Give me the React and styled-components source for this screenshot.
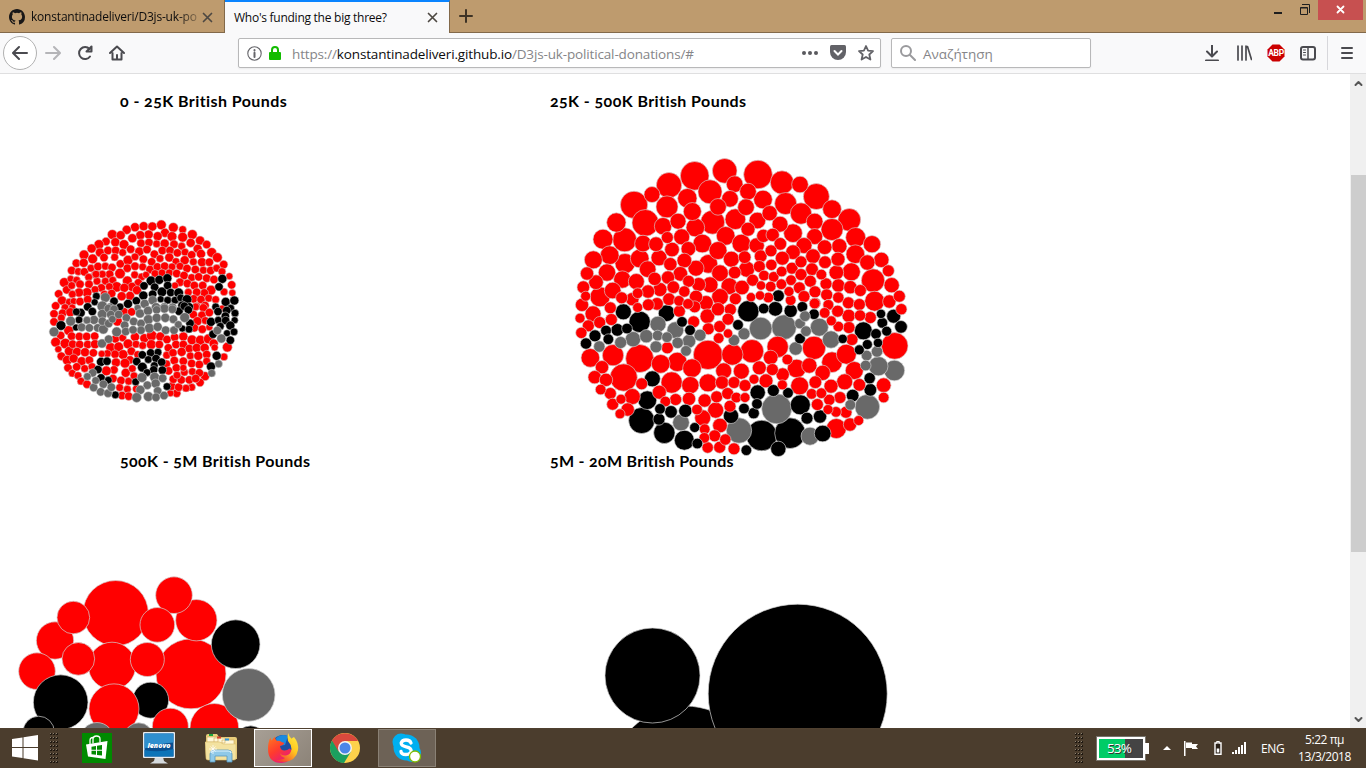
import React from "react";
import styled, { createGlobalStyle, css } from "styled-components";

const GlobalStyle = createGlobalStyle`
  * { box-sizing: border-box; }
  body { margin: 0; background: #fff; overflow: hidden; }
  svg { display: block; flex: none; }
`;

const Desktop = styled.div`
  display: flex;
  flex-direction: column;
  width: 1366px;
  height: 768px;
  overflow: hidden;
  font-family: "Open Sans", "Noto Sans", sans-serif;
`;

/* ---------- title bar ---------- */

const TitleBar = styled.header`
  display: flex;
  height: 33px;
  background: #be9b6e;
  box-shadow: inset 0 -1px #82694a;
`;

const Tab = styled.div`
  display: flex;
  align-items: center;
  width: 225px;
  height: 33px;
  padding: 1px 11px 0 9px;
  border-right: 1px solid #82694a;
  ${(p) =>
    p.$active &&
    css`
      padding-top: 0;
      background: #f9f9fa;
      border-top: 2px solid #0a84ff;
    `}
`;

const TabLabel = styled.span`
  flex: 1;
  margin-left: ${(p) => (p.$icon ? 6 : 0)}px;
  padding-bottom: 1px;
  white-space: nowrap;
  font-size: 12px;
  letter-spacing: ${(p) => p.$track}px;
  color: #0c0c0d;
  ${(p) =>
    p.$icon &&
    css`
      mask-image: linear-gradient(to right, #000 86%, transparent 102%);
    `}
`;

const NewTab = styled.div`
  display: flex;
  padding: 9px 0 0 9px;
`;

const WindowControls = styled.div`
  display: flex;
  margin-left: auto;
  margin-right: 3px;
`;

const ControlButton = styled.div`
  display: flex;
  justify-content: center;
  align-items: center;
  width: ${(p) => p.$w}px;
  height: ${(p) => (p.$close ? 20 : 19)}px;
  padding-bottom: ${(p) => (p.$close ? 1 : 0)}px;
  background: ${(p) => (p.$close ? "#c75050" : "transparent")};
`;

/* ---------- navigation bar ---------- */

const NavBar = styled.nav`
  display: flex;
  align-items: center;
  height: 41px;
  background: #f9f9fa;
  border-bottom: 1px solid #dfdfe0;
`;

const BackButton = styled.div`
  display: grid;
  place-items: center;
  width: 34px;
  height: 34px;
  margin-left: 3px;
  border: 1px solid #b1b1b1;
  border-radius: 50%;
  background: #fff;
`;

const NavButton = styled.div`
  display: grid;
  place-items: center;
  width: 32px;
  height: 32px;
`;

const Field = styled.div`
  display: flex;
  align-items: center;
  width: ${(p) => p.$w}px;
  height: 30px;
  margin-left: ${(p) => p.$gap}px;
  padding: 0 6px 0 8px;
  border: 1px solid #b8b8b9;
  border-radius: 2px;
  background: #fff;
  box-shadow: 0 1px 2px rgba(0, 0, 0, 0.06);
`;

const FieldText = styled.span`
  flex: 1;
  margin-left: ${(p) => p.$gap}px;
  padding-top: 2px;
  white-space: nowrap;
  font-size: 13.5px;
  letter-spacing: ${(p) => p.$track}px;
  color: #858588;
  b { font-weight: 400; color: #0c0c0d; }
`;

const FieldIcons = styled.div`
  display: flex;
  align-items: center;
  gap: ${(p) => p.$gap}px;
`;

const Tools = styled.div`
  display: flex;
  align-items: center;
  margin-left: auto;
  padding-right: 3px;
`;

const Divider = styled.div`
  width: 1px;
  height: 34px;
  margin: 0 3px;
  background: #d7d7db;
`;

/* ---------- page ---------- */

const Viewport = styled.main`
  display: flex;
  height: 654px;
  background: #fff;
`;

const ChartGrid = styled.section`
  display: grid;
  flex: 1;
  grid-template-columns: 430px 500px;
  grid-auto-rows: 360px;
  padding-top: 9px;
  height: 654px;
  overflow: hidden;
`;

const ChartTitle = styled.h3`
  height: 36px;
  margin: 0;
  padding-left: 120px;
  line-height: 36px;
  white-space: nowrap;
  font-family: Lato, sans-serif;
  font-size: 16px;
  font-weight: 700;
  font-variant-numeric: oldstyle-nums;
  letter-spacing: ${(p) => p.$track}px;
  color: #000;
`;

const Canvas = styled.svg`
  overflow: visible;
`;

const ScrollBar = styled.div`
  display: flex;
  flex-direction: column;
  align-items: center;
  width: 16px;
  padding: 6px 0 5px;
  background: #f0f0f0;
`;

const Thumb = styled.div`
  width: 15px;
  height: 377px;
  margin: 88px 0 auto;
  align-self: flex-end;
  background: #cdcdcd;
`;

/* ---------- task bar ---------- */

const TaskBar = styled.footer`
  display: flex;
  align-items: center;
  height: 40px;
  background: linear-gradient(#514231 0, #4b3d2d 2px, #4b3d2d 100%);
`;

const StartButton = styled.div`
  display: flex;
  width: 49px;
  padding-left: 11px;
`;

const AppButton = styled.div`
  display: grid;
  place-items: center;
  width: 58px;
  height: 38px;
  margin: 0 2px;
  border: 1px solid transparent;
  ${(p) =>
    p.$state === "active" &&
    css`
      border-color: #fff;
      background: linear-gradient(135deg, #a79f95, #8c8378);
    `}
  ${(p) =>
    p.$state === "open" &&
    css`
      border-color: #8a8175;
      background: #6d6256;
    `}
`;

const Apps = styled.div`
  display: flex;
  margin-left: 7px;
`;

const Tray = styled.div`
  display: flex;
  align-items: center;
  margin-left: auto;
  color: #fff;
  font-size: 12px;
`;

const Battery = styled.div`
  position: relative;
  width: 48px;
  height: 23px;
  margin: 0 18px 0 13px;
  border: 2px solid #fff;
  outline: 1px solid #77736b;
  background: linear-gradient(to right, #00cc66 60%, #444 60%);
  line-height: 18px;
  padding-right: 4px;
  text-align: center;
  font-size: 13.5px;
  letter-spacing: -0.8px;
  text-shadow: 1px 1px #333;
  &::after {
    content: "";
    position: absolute;
    right: -6px;
    top: 4px;
    width: 4px;
    height: 11px;
    background: #fff;
  }
`;

const TrayIcon = styled.div`
  margin-right: ${(p) => p.$gap}px;
`;

const Language = styled.span`
  width: 24px;
  letter-spacing: -0.4px;
  white-space: nowrap;
`;

const Clock = styled.div`
  width: 81px;
  padding-right: 2px;
  text-align: center;
  line-height: 17px;
  letter-spacing: -0.45px;
  white-space: nowrap;
`;

/* ---------- chart data: x y r, in thirds of a pixel ---------- */

const RED = "#ff0000";
const BLACK = "#000000";
const GREY = "#696969";

const parse = (fill, dx, dy, text) =>
  text
    .split(";")
    .map((t) => t.trim())
    .filter(Boolean)
    .map((t) => {
      const [x, y, r] = t.split(",").map(Number);
      return { x: dx + x / 3, y: dy + y / 3 + 0.2, r: r / 3, fill };
    });

const bySize = (list) => [...list].sort((a, b) => b.r - a.r);

const smallDonations = [
  ...parse(RED, 40, 210, `364,44,14;400,52,14;428,58,11;457,73,14;285,51,13;311,48,13;337,49,13;260,59,13;217,73,14;242,75,13;480,91,13;500,103,12;375,68,13;353,78,13;326,73,13;301,75,13;277,84,13;396,79,14;428,81,14;452,98,13;198,94,12;177,103,14;155,115,13;132,134,14;109,159,12;226,96,13;252,103,14;303,99,12;327,97,12;350,101,11;374,100,13;402,102,12;425,108,11;473,116,13;515,127,14;532,142,14;551,163,12;180,127,13;204,121,12;227,121,12;248,127,11;272,117,12;298,124,13;321,118,12;343,132,12;367,121,12;390,121,12;412,128,12;435,126,11;455,134,12;483,131,13;158,146,14;192,142,12;224,141,11;241,161,12;264,150,14;285,140,11;310,147,12;335,155,12;360,145,11;388,142,13;408,154,11;434,150,13;460,155,11;486,156,13;508,156,12;131,158,13;95,181,12;115,184,11;133,185,12;153,174,11;174,169,12;196,168,11;216,172,12;209,192,12;187,192,11;165,193,11;240,190,15;262,174,12;285,168,12;308,170,11;330,178,12;352,170,12;374,168,12;396,170,11;420,168,11;441,175,12;466,178,12;490,180,11;512,181,12;530,174,11;546,184,11;568,198,10;575,224,12;577,248,10;73,217,14;92,206,10;110,210,11;146,201,11;56,251,12;80,239,12;95,226,11;120,222,12;147,222,12;171,213,11;196,213,11;218,210,11;230,230,15;208,229,11;184,233,12;165,238,11;141,247,14;117,247,13;97,252,11;66,271,13;47,287,12;262,212,14;284,194,11;305,200,11;295,218,12;276,230,13;253,233,13;291,240,13;270,257,13;245,258,13;318,194,10;345,190,11;366,188,11;388,188,11;410,190,12;432,196,12;455,202,11;476,200,12;500,204,12;522,208,12;420,216,12;405,226,10;442,220,12;463,226,12;488,226,12;513,240,14;493,248,12;470,246,12;445,246,11;461,266,12;483,268,12;506,264,11;527,268,11;552,245,11;470,288,11;495,286,12;88,276,11;101,273,10;120,274,12;143,268,12;75,292,11;97,292,10;193,252,11;215,250,12;168,192,11`),
  ...parse(RED, 40, 305, `42,26,12;42,50,12;68,24,12;91,21,13;64,38,11;86,76,14;62,91,12;47,111,14;76,115,15;88,138,14;55,132,10;64,153,12;82,165,14;84,188,12;97,204,11;114,211,11;123,228,11;141,237,12;95,93,12;118,94,12;140,94,12;164,93,12;98,117,12;119,118,12;143,118,12;165,117,13;111,140,13;135,141,13;160,143,12;101,160,13;125,168,13;148,165,12;110,185,12;134,190,11;156,184,11;232,48,14;253,20,12;275,20,12;226,101,12;248,98,11;212,127,14;236,125,14;264,116,14;285,95,13;313,99,13;335,91,15;361,94,13;381,103,12;404,96,12;430,94,13;456,104,14;481,105,14;505,101,14;288,117,11;308,121,11;334,118,14;358,118,12;385,128,12;408,118,12;430,118,12;249,148,14;225,147,12;202,145,11;185,146,10;274,138,12;270,164,12;293,148,11;228,172,13;255,174,14;222,194,12;199,197,14;257,203,13;277,190,11;219,220,12;243,226,12;266,228,11;239,247,11;262,252,11;246,271,12;266,273,12;290,251,12;282,212,11;380,150,11;399,143,12;425,140,13;448,130,12;470,128,13;494,128,13;521,115,13;562,126,14;552,155,11;380,176,11;403,166,12;386,197,12;409,188,12;430,168,12;451,152,11;475,152,13;500,148,12;524,127,10;455,175,12;478,178,12;500,168,11;495,213,13;480,232,12;455,246,11;438,249,11;410,264,12;391,264,10;395,243,12;416,246,12;400,222,12;424,224,12;411,210,11;433,201,11;457,199,11;478,203,12;448,224,12;467,220,12;467,5,11;490,8,12;547,10,10;460,28,12;486,30,12;508,22,12;472,48,13;496,46,11;463,68,12;487,72,12;508,66,10;430,188,10`),
  ...parse(BLACK, 40, 210, `547,206,13;537,230,12;333,212,14;358,209,13;382,204,13;312,227,12;344,231,12;366,245,14;383,226,12;392,247,12;416,248,14;338,252,12;310,256,13;289,272,12;264,281,13;222,273,12;240,290,11;169,258,11;164,276,10;143,290,11;362,267,10;383,270,11;405,270,11;422,263,11;441,268,14;427,286,13;448,290,12;527,290,11;557,275,13;583,271,13;572,294,11`),
  ...parse(BLACK, 40, 305, `122,23,13;109,20,11;143,5,12;157,19,12;117,44,11;63,61,14;108,67,10;417,18,12;433,3,12;445,14,12;450,54,12;427,70,10;447,72,11;534,19,12;560,16,12;585,24,11;513,50,13;535,45,11;556,33,12;557,46,12;584,45,10;541,63,11;571,61,13;582,80,11;561,84,10;571,105,12;519,87,12;530,152,13;513,184,13;183,170,13;201,168,12;174,193,12;183,218,12;205,225,11;226,269,11;287,230,11;381,244,11;307,149,12;332,143,12;354,141,11;290,169,12;307,186,14;325,163,11;348,160,12;365,171,12;343,181,11;341,194,12;367,195,12;321,202,11`),
  ...parse(GREY, 40, 210, `196,262,14;187,288,15;210,291,12;314,281,13;338,270,13;293,293,10;348,291,13;373,290,12;398,290,11;325,300,11`),
  ...parse(GREY, 40, 305, `92,48,14;42,80,14;187,27,14;205,10,12;222,12,12;212,28,12;162,44,13;141,45,11;125,66,12;148,68,12;173,68,12;190,72,14;187,48,12;206,55,12;217,42,11;230,80,14;236,28,12;259,38,12;254,60,12;257,79,12;281,49,12;300,25,13;324,17,13;373,10,13;350,14,12;397,12,12;325,43,14;350,38,13;376,38,13;400,42,12;434,37,14;303,55,12;328,69,14;303,75,12;279,74,12;353,65,13;377,75,12;402,75,12;415,58,11;186,115,13;206,102,12;544,100,13;532,76,12;536,176,11;515,204,11;158,203,12;142,214,11;161,247,12;167,226,11;190,237,12;182,260,12;204,264,12;214,246,12;306,217,14;344,216,14;368,219,12;322,240,12;347,235,13;301,254,13;290,277,14;325,274,14;353,257,12;348,276,12;372,271,12`),
].map((d) => ({ ...d, r: d.r + 0.2 }));

const mediumDonations = bySize([
  ...parse(RED, 570, 150, `374,77,43;464,62,37;297,105,38;246,133,24;192,164,41;420,125,36;352,144,29;291,170,33;494,102,25;480,146,25;367,184,27;444,170,25;226,218,40;139,217,29;99,267,30;164,269,36;279,228,26;324,213,24;376,232,28;428,216,36;496,207,31;467,257,28;335,260,24;292,262,18;219,280,25;258,282,22;306,298,22;355,296,22;397,280,28;444,301,27;484,327,24;514,280,28;119,315,28;70,329,27;165,340,30;209,325,28;267,323,24;343,331,22;301,342,20;415,341,28;378,354,24;111,367,26;51,370,20;78,396,22;40,411,19;157,388,26;233,357,25;199,394,24;254,386,20;294,382,20;331,371,22;356,393,18;386,403,21;420,404,24;450,369,25;494,367,19;478,408,25;516,412,22;128,421,25;47,438,15;36,464,20;90,440,30;155,443,18;187,447,20;203,429,16;234,424,20;270,418,21;310,411,19;343,424,17;378,440,20;297,447,19;327,452,16;354,461,16;450,440,25;408,458,22;496,446,18;261,461,19;203,472,15;235,464,18;121,473,18`),
  ...parse(RED, 740, 150, `54,73,43;126,97,35;180,103,25;229,139,39;24,124,25;69,148,28;137,160,33;183,190,32;18,171,25;276,177,28;328,209,34;89,189,23;52,211,25;120,222,24;224,214,25;276,238,33;159,249,28;24,237,21;70,257,20;98,254,20;224,259,24;347,262,30;396,282,26;424,329,23;445,362,18;455,405,23;478,438,18;399,391,35;346,312,28;382,337,23;298,288,23;254,291,22;192,286,24;121,281,19;159,306,22;127,324,21;93,302,18;50,286,23;14,321,19;62,318,19;94,344,17;58,349,18;20,357,24;38,390,18;72,376,16;101,380,16;125,364,16;156,354,18;183,335,18;219,318,22;255,336,19;294,327,21;216,357,19;289,367,22;334,365,27;183,373,18;153,390,16;124,402,16;92,409,16;63,406,14;211,393,18;244,373,16;258,401,18;295,406,20;331,411,20;361,421,18;404,453,30;178,413,18;147,424,15;33,441,14;60,436,14;85,442,16;192,439,18;225,425,18;260,434,18;295,442,17;152,450,16;225,459,17;265,464,16;325,458,18;358,463,18;448,454,20`),
  ...parse(RED, 570, 300, `328,33,18;374,20,18;412,48,22;444,27,20;481,28,18;69,41,24;30,54,15;55,77,18;89,67,18;124,58,18;34,98,17;371,65,18;415,86,18;449,79,18;474,57,18;446,114,16;474,100,14;292,143,18;61,173,28;129,165,32;209,175,42;161,232,41;96,201,20;74,231,20;108,239,20;92,268,16;121,280,18;215,251,18;272,191,28;322,185,29;366,204,28;414,164,44;487,163,32;461,212,24;514,213,24;305,247,32;361,255,26;414,248,27;456,247,20;492,247,18;268,276,21;187,289,24;153,297,15;128,312,18;173,328,20;150,341,15;286,304,16;317,298,18;357,296,20;404,301,20;440,290,18;473,280,18;499,292,16;381,328,16;437,330,24;480,318,18;398,353,24;450,376,22;404,387,16;403,413,16;434,407,18;466,418,17;413,442,17;449,441,18;492,446,18`),
  ...parse(BLACK, 570, 300, `160,35,24;209,65,32;290,39,25;336,65,16;360,90,16;504,74,16;108,91,16;142,89,19;171,85,16;75,107,18;48,130,17;115,117,16;247,236,24;232,300,28;215,361,39;270,326,16;303,335,19;346,332,20;267,357,18;283,398,32;374,382,15;343,420,30;382,430,16;483,347,23`),
  ...parse(GREY, 570, 300, `88,139,17;152,127,18;189,117,23;229,108,20;264,72,24;263,106,16;291,111,16;316,90,25;258,140,18;323,128,17;357,123,20;390,105,18;348,152,16;492,120,17;333,367,25;507,391,38`),
  ...parse(BLACK, 740, 300, `65,406,46;150,399,46;25,33,32;71,25,16;106,26,22;115,-13,18;152,32,20;187,20,16;222,42,16;423,41,14;461,48,21;427,68,16;483,80,19;370,92,27;408,101,16;440,93,15;414,128,14;382,133,15;358,149,15;308,116,14;180,115,16;389,234,17;391,269,19;338,286,19;53,277,23;100,271,18;144,278,16;181,314,30;51,311,16;41,339,17;12,325,16;201,354,18;240,349,20;248,400,25;115,446,23;19,450,16`),
  ...parse(GREY, 740, 300, `62,85,34;132,81,37;180,70,16;195,48,16;198,93,16;238,81,27;273,118,26;167,145,20;12,101,18;380,166,16;411,154,17;377,196,16;415,198,29;463,211,31;331,314,16;382,320,37;110,326,45;210,408,27`),
  ...parse(RED, 740, 300, `224,10,16;265,14,16;254,38,16;293,33,18;326,47,20;274,62,15;295,79,16;327,82,18;360,46,17;391,52,18;484,27,17;336,118,18;464,137,40;113,140,32;36,153,35;92,172,22;222,143,35;319,162,30;276,186,31;142,178,16;170,205,28;208,196,23;248,218,23;343,211,27;58,203,21;97,208,18;128,223,20;42,237,15;78,242,21;15,256,18;179,257,27;127,254,15;226,246,19;314,245,24;358,254,19;273,258,21;431,255,22;431,292,16;15,292,15;215,281,16;244,279,16;300,292,18;232,313,18;268,299,17;264,328,15;288,335,16;318,336,18;289,385,30;330,373,20;356,361,15`),
]);

const largeDonations = [
  ...parse(RED, 0, 560, `165,241,56;347,159,98;336,317,71;111,333,55;573,341,105`),
  ...parse(BLACK, 0, 560, `452,420,54;182,426,82;116,515,47`),
  ...parse(RED, 0, 560, `589,180,62;522,105,55;472,194,52;220,172,49;235,296,49;442,298,51;342,446,75;511,498,54;643,503,73`),
  ...parse(BLACK, 0, 560, `707,252,73;752,545,48`),
  ...parse(GREY, 0, 560, `746,404,79;291,537,50;416,532,44`),
];

const hugeDonations = [
  { x: 685, y: 781, r: 75, fill: BLACK },
  { x: 652.5, y: 675.5, r: 47.5, fill: BLACK },
  { x: 797.7, y: 693.7, r: 89.5, fill: BLACK },
];

const charts = [
  { title: "0 - 25K British Pounds", track: 0.43, top: 119, left: 0, width: 430, dots: smallDonations, stroke: 0.55 },
  { title: "25K - 500K British Pounds", track: 0.42, top: 119, left: 430, width: 500, dots: mediumDonations, stroke: 0.65 },
  { title: "500K - 5M British Pounds", track: 0.37, top: 479, left: 0, width: 430, dots: largeDonations, stroke: 0.7 },
  { title: "5M - 20M British Pounds", track: 0.3, top: 479, left: 430, width: 500, dots: hugeDonations, stroke: 0.7 },
];

function BubbleChart({ chart }) {
  return (
    <div>
      <ChartTitle $track={chart.track}>{chart.title}</ChartTitle>
      <Canvas width={chart.width} height="324" viewBox={`${chart.left} ${chart.top} ${chart.width} 324`}>
        {chart.dots.map((d, i) => (
          <circle key={i} cx={d.x} cy={d.y} r={d.r} fill={d.fill} stroke="#d3d3d3" strokeWidth={chart.stroke} />
        ))}
      </Canvas>
    </div>
  );
}

/* ---------- icons ---------- */

const Line = ({ w = 16, h = 16, sw = 2, color = "#4a4a4f", box, children }) => (
  <svg width={w} height={h} viewBox={box || `0 0 ${w} ${h}`} fill="none" stroke={color} strokeWidth={sw} strokeLinecap="round" strokeLinejoin="round">
    {children}
  </svg>
);

const CloseIcon = () => (
  <Line w={11} h={11} sw={1.7} color="#4d4842"><path d="M1.5 1.5l8 8M9.5 1.5l-8 8" /></Line>
);

const GithubIcon = () => (
  <svg width="16" height="16" viewBox="0 0 16 16" fill="#191717">
    <path d="M8 0C3.58 0 0 3.58 0 8c0 3.54 2.29 6.53 5.47 7.59.4.07.55-.17.55-.38 0-.19-.01-.82-.01-1.49-2.01.37-2.53-.49-2.69-.94-.09-.23-.48-.94-.82-1.13-.28-.15-.68-.52-.01-.53.63-.01 1.08.58 1.23.82.72 1.21 1.87.87 2.33.66.07-.52.28-.87.51-1.07-1.78-.2-3.64-.89-3.64-3.95 0-.87.31-1.59.82-2.15-.08-.2-.36-1.02.08-2.12 0 0 .67-.21 2.2.82a7.6 7.6 0 0 1 4 0c1.53-1.04 2.2-.82 2.2-.82.44 1.1.16 1.92.08 2.12.51.56.82 1.27.82 2.15 0 3.07-1.87 3.75-3.65 3.95.29.25.54.73.54 1.48 0 1.07-.01 1.93-.01 2.2 0 .21.15.46.55.38A8.01 8.01 0 0 0 16 8c0-4.42-3.58-8-8-8z" />
  </svg>
);

const Grip = () => (
  <svg width="10" height="32" viewBox="0 0 10 32">
    {Array.from({ length: 24 }, (_, i) => {
      const x = (i % 3) * 3 + 1;
      const y = Math.floor(i / 3) * 4 + 1;
      return (
        <g key={i}>
          <rect x={x} y={y} width="2" height="2" fill="#1f1810" />
          <rect x={x} y={y} width="1" height="1" fill="#8d8171" />
        </g>
      );
    })}
  </svg>
);

const StoreIcon = () => (
  <svg width="30" height="30" viewBox="0 0 30 30">
    <rect width="30" height="30" fill="#008a00" />
    <path d="M8 11V7.500Q8 4.500 11 4.500M11 10.500V6.500q0-3.500 3.500-3.500T18 6v3.500" fill="none" stroke="#fff" strokeWidth="1.300" />
    <path d="M4 11.500L25.500 8 23.500 26 6 23.500z" fill="#fff" />
    <path d="M9.500 13.700l4.500-.7v3.800H9.500zM15 12.800l5-.8v4.800h-5zM9.500 17.800H14v4l-4.500-.6zM15 17.800h5v4.800l-5-.7z" fill="#008a00" />
  </svg>
);

const MonitorIcon = () => (
  <svg width="32" height="32" viewBox="0 0 32 32">
    <path d="M12 25h8l1 4 4 2.500H7L11 29z" fill="#d5dadd" />
    <rect x="0" y="0" width="32" height="26" rx="1" fill="#e9edf0" />
    <rect x="1.500" y="1.500" width="29" height="23" fill="#0a4f8f" />
    <path d="M1.500 1.500h29v9q-14 1-29 6z" fill="#2f8fce" />
    <path d="M1.500 18q14 3 29-1v7.500h-29z" fill="#0d74b8" />
    <text x="16" y="15.500" textAnchor="middle" fontFamily="Open Sans, sans-serif" fontWeight="800" fontStyle="italic" fontSize="7" fill="#fff">lenovo</text>
  </svg>
);

const FolderIcon = () => (
  <svg width="32" height="30" viewBox="0 0 32 30">
    <path d="M1 3q0-2 2-2h9l2 3h16q2 0 2 2v20H1z" fill="#e8cd7c" />
    <path d="M2 4h11v5H2zM9 5h11v5H9zM17 7h12v5H17z" fill="#fff7d8" stroke="#cda954" strokeWidth=".6" />
    <rect x="4" y="1" width="4" height="2" fill="#18a53d" />
    <rect x="12" y="3.500" width="4" height="2" fill="#d9402d" />
    <rect x="20" y="5.500" width="4" height="2" fill="#3297dc" />
    <path d="M0 9h15l3 2h13v14q0 2-2 2H3q-2 0-2-2z" fill="#f3e2a0" stroke="#dcbf6c" strokeWidth=".6" />
    <path d="M5 29v-8q0-4 4-4h14q4 0 4 4v8h-5v-6H10v6z" fill="#8fc9e8" stroke="#5698bd" strokeWidth=".8" />
    <path d="M6 20q0-2 3-2h14q3 0 3 2" fill="none" stroke="#dff3fc" strokeWidth="1.200" />
    <path d="M8 12v9M4 16h8M5.500 13.500l5 5M10.500 13.500l-5 5" stroke="#fff" strokeWidth=".7" />
  </svg>
);

const FirefoxIcon = () => (
  <svg width="32" height="32" viewBox="0 0 32 32">
    <defs>
      <linearGradient id="fox" x1="0" y1="0" x2=".7" y2="1">
        <stop offset="0" stopColor="#ff7a1f" /><stop offset=".5" stopColor="#ff3b2e" /><stop offset="1" stopColor="#e31587" />
      </linearGradient>
      <linearGradient id="flame" x1="1" y1="0" x2=".3" y2="1">
        <stop offset="0" stopColor="#fff04d" /><stop offset=".5" stopColor="#ffc81f" /><stop offset="1" stopColor="#f5462f" />
      </linearGradient>
    </defs>
    <circle cx="16" cy="15" r="12" fill="#1f4fa3" />
    <path d="M9 6q5-5 12-2l-3 9-8 1z" fill="#1a8ae0" />
    <path d="M3.500 5.500q0 2 1 3l3.500-4q0 3.500 2 4.500 2.500-1 4.500 1l3 1q-1 2.500-4.500 3 .5 4.500 4.500 4.500 3 0 5-2l5 4q-4 10.500-13 10.500Q1 31 1 17q0-7 2.500-11.500z" fill="url(#fox)" />
    <path d="M13 21.500q2 2.500 6 2 5-1 5.500-6.500-.5-5-3.500-8-1-5 .5-8Q21.500 4 24.500 6.500L27 5q5 6 4 13-2 11-14 12-5 0-8-2 6 0 9-2-4-1-5-4.500z" fill="url(#flame)" />
  </svg>
);

const ChromeIcon = () => (
  <svg width="30" height="30" viewBox="0 0 30 30">
    <circle cx="15" cy="15" r="15" fill="#fdd24b" />
    <path d="M2 7.500A15 15 0 0 0 14 30L21 18.500 15 15z" fill="#1ba05f" />
    <path d="M2 7.500L8.500 18.500 15 8h13A15 15 0 0 0 2 7.500z" fill="#d9493d" />
    <circle cx="15" cy="15" r="7" fill="#f3f3f3" />
    <circle cx="15" cy="15" r="5.500" fill="#4a86e8" />
  </svg>
);

const SkypeIcon = () => (
  <svg width="30" height="30" viewBox="0 0 30 30">
    <circle cx="9" cy="9" r="8.500" fill="#00aff0" /><circle cx="20" cy="20" r="9" fill="#00aff0" />
    <circle cx="14.500" cy="14.500" r="13" fill="#00aff0" />
    <path d="M19 10q-1-3-5-3t-4.800 3q0 2.800 5 3.800t5 4.200q-.5 3.500-5.200 3.500T9 18.500" fill="none" stroke="#fff" strokeWidth="3.300" strokeLinecap="round" />
    <circle cx="23" cy="23.500" r="5.500" fill="#fff" stroke="#7fba00" strokeWidth="1.300" />
  </svg>
);

const pinned = [
  { Icon: StoreIcon }, { Icon: MonitorIcon }, { Icon: FolderIcon },
  { Icon: FirefoxIcon, state: "active" }, { Icon: ChromeIcon }, { Icon: SkypeIcon, state: "open" },
];

export default function App() {
  return (
    <Desktop>
      <GlobalStyle />
      <TitleBar>
        <Tab>
          <GithubIcon />
          <TabLabel $icon $track={-0.2}>konstantinadeliveri/D3js-uk-po</TabLabel>
          <CloseIcon />
        </Tab>
        <Tab $active>
          <TabLabel $track={-0.26}>Who's funding the big three?</TabLabel>
          <CloseIcon />
        </Tab>
        <NewTab><Line w={14} h={14} color="#3d3225"><path d="M7 1v12M1 7h12" /></Line></NewTab>
        <WindowControls>
          <ControlButton $w={28}><svg width="8" height="8" viewBox="0 0 8 8"><rect y="6" width="8" height="2" fill="#1e1e1e" /></svg></ControlButton>
          <ControlButton $w={26}>
            <svg width="10" height="11" viewBox="0 0 10 11" fill="none" stroke="#1e1e1e">
              <path d="M2 .5h7.500V9M.5 3.500h7v7h-7zM.5 4h7" />
            </svg>
          </ControlButton>
          <ControlButton $w={45} $close><Line w={9} h={9} sw={1.800} color="#fff"><path d="M1.500 1.500l6 6M7.500 1.500l-6 6" /></Line></ControlButton>
        </WindowControls>
      </TitleBar>

      <NavBar>
        <BackButton><Line><path d="M15 8H1.500M7 2L1 8l6 6" /></Line></BackButton>
        <NavButton><Line color="#b5b5b8"><path d="M1 8h13.500M9 2l6 6-6 6" /></Line></NavButton>
        <NavButton><Line><path d="M13 11.500A6 6 0 1 1 12.500 4M14.500 1.500v5h-5z" /></Line></NavButton>
        <NavButton>
          <Line><path d="M1 8l7-6.500L15 8M3.500 8v6.500h9V8M8 14v-4" /></Line>
        </NavButton>
        <Field $w={643} $gap={105}>
          <FieldIcons $gap={7}>
            <Line w={15} h={15} sw={1.100} color="#65656a"><circle cx="7.500" cy="7.500" r="6.700" /><path d="M7.500 6.800v4.200M7.500 4v.4" strokeWidth="2" /></Line>
            <svg width="12" height="14" viewBox="0 0 12 14"><path d="M3 7V4a3 3 0 0 1 6 0v3" fill="none" stroke="#12bc00" strokeWidth="2" /><rect y="6" width="12" height="8" rx="1" fill="#12bc00" /></svg>
          </FieldIcons>
          <FieldText $gap={11} $track={-0.15}>https://<b>konstantinadeliveri.github.io</b>/D3js-uk-political-donations/#</FieldText>
          <FieldIcons $gap={12}>
            <svg width="16" height="4" viewBox="0 0 16 4" fill="#59595e"><circle cx="2" cy="2" r="2" /><circle cx="8" cy="2" r="2" /><circle cx="14" cy="2" r="2" /></svg>
            <svg width="16" height="16" viewBox="0 0 16 16"><path d="M1.500 0h13Q16 0 16 1.500V7a8 8 0 0 1-16 0V1.500Q0 0 1.500 0z" fill="#626267" /><path d="M4.500 6L8 9.500 11.500 6" fill="none" stroke="#fff" strokeWidth="2" strokeLinecap="round" /></svg>
            <Line sw={1.800} color="#626267"><path d="M8 1l2.100 4.600 4.900.5-3.700 3.400 1.100 5L8 12l-4.400 2.500 1.100-5L1 6.100l4.900-.5z" /></Line>
          </FieldIcons>
        </Field>
        <Field $w={200} $gap={10}>
          <Line color="#9a9a9d"><circle cx="6" cy="6" r="5" /><path d="M10 10l5 5" /></Line>
          <FieldText $gap={7} $track={-0.05}>Αναζήτηση</FieldText>
        </Field>
        <Tools>
          <NavButton><Line><path d="M8 0.500v11M3 7l5 5 5-5M2 16h12" transform="translate(0 -.5)" /></Line></NavButton>
          <NavButton><Line><path d="M2 1v14M6 1v14M10 1v14M11.500 1.500l4 13" strokeWidth="1.700" /></Line></NavButton>
          <NavButton>
            <svg width="18" height="18" viewBox="0 0 18 18">
              <path d="M5.500.5h7l5 5v7l-5 5h-7l-5-5v-7z" fill="#cb0000" />
              <text x="9" y="12.200" textAnchor="middle" fontFamily="Roboto, sans-serif" fontWeight="700" fontSize="8.500" letterSpacing="-.3" fill="#fff">ABP</text>
            </svg>
          </NavButton>
          <NavButton><Line><rect x="1" y="2" width="14" height="12.500" rx="2" /><path d="M8 2v12" strokeWidth="1.500" /><path d="M3.500 5h2M3.500 7.500h2M3.500 10h2" strokeWidth="1" /></Line></NavButton>
          <Divider />
          <NavButton><Line w={12} h={14}><path d="M1 2h10M1 7h10M1 12h10" /></Line></NavButton>
        </Tools>
      </NavBar>

      <Viewport>
        <ChartGrid>
          {charts.map((c) => <BubbleChart key={c.title} chart={c} />)}
        </ChartGrid>
        <ScrollBar>
          <Line w={9} h={7} sw={2} color="#555"><path d="M1.500 5l3-3 3 3" /></Line>
          <Thumb />
          <Line w={9} h={7} sw={2} color="#555"><path d="M1.500 2l3 3 3-3" /></Line>
        </ScrollBar>
      </Viewport>

      <TaskBar>
        <StartButton>
          <svg width="28" height="26" viewBox="0 0 28 26" fill="#fff"><path d="M1 4l10.500-1.500V12H1zM12.500 2.300L27 0v12H12.500zM1 13h10.500v10L1 21.500zM12.500 13H27v12.500l-14.500-2.200z" /></svg>
        </StartButton>
        <Grip />
        <Apps>
          {pinned.map(({ Icon, state }, i) => <AppButton key={i} $state={state}><Icon /></AppButton>)}
        </Apps>
        <Tray>
          <Grip />
          <Battery>53%</Battery>
          <TrayIcon $gap={13}><svg width="8" height="4" viewBox="0 0 8 4"><path d="M4 0l4 4H0z" fill="#fff" /></svg></TrayIcon>
          <TrayIcon $gap={15}><svg width="15" height="15" viewBox="0 0 15 15" fill="#fff"><path d="M0 0h1.500v15H0zM2 1.500h6V3h6l-2 2.500L14 8H8V7H2z" /></svg></TrayIcon>
          <TrayIcon $gap={10}><svg width="8" height="14" viewBox="0 0 8 14"><path d="M3 .5h2v1.500h2v11.200H1V2h2z" fill="#2a2118" stroke="#fff" strokeWidth="1.400" /><rect x="2.700" y="7.500" width="2.600" height="4" fill="#fff" /></svg></TrayIcon>
          <TrayIcon $gap={14}><svg width="15" height="12" viewBox="0 0 15 12" fill="#fff"><path d="M0 10h2v2H0zM3 8h2v4H3zM6 5h2v7H6zM9 3h2v9H9zM12 0h2v12h-2z" /></svg></TrayIcon>
          <Language>ENG</Language>
          <Clock>5:22 πμ<br />13/3/2018</Clock>
        </Tray>
      </TaskBar>
    </Desktop>
  );
}
